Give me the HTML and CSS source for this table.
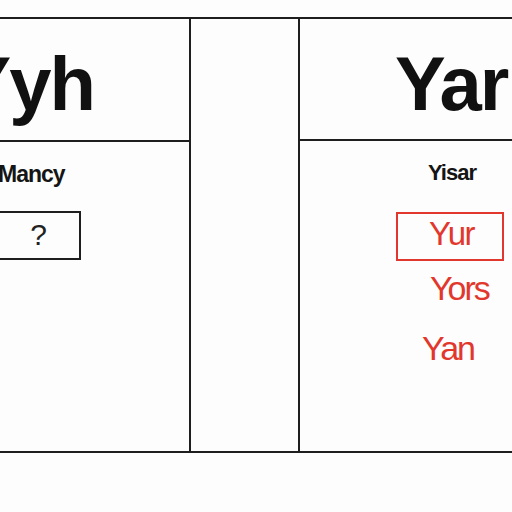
FILE: index.html
```html
<!DOCTYPE html>
<html>
<head>
<meta charset="utf-8">
<link rel="stylesheet" href="styles.css">
</head>
<body>
<div class="table">
  <div class="col col-left">
    <div class="head head-left"><span class="big">Yyh</span></div>
    <div class="body">
      <div class="label label-left">Mancy</div>
      <div class="qbox">?</div>
    </div>
  </div>
  <div class="col col-mid"></div>
  <div class="col col-right">
    <div class="head head-right"><span class="big">Yar</span></div>
    <div class="body body-right">
      <div class="label label-right">Yisar</div>
      <div class="rbox">Yur</div>
      <div class="red red-1">Yors</div>
      <div class="red red-2">Yan</div>
    </div>
  </div>
</div>
</body>
</html>
```
FILE: styles.css
```css
html, body {
  margin: 0;
  padding: 0;
  background: #fdfdfd;
  font-family: "Liberation Sans", Arial, sans-serif;
  color: #111;
}
body {
  padding-top: 17px;
  width: 512px;
  height: 512px;
  overflow: hidden;
  box-sizing: border-box;
}
.table {
  display: grid;
  grid-template-columns: 191px 109px 1fr;
  height: 436px;
  box-sizing: border-box;
  border-top: 2px solid #1e1e1e;
  border-bottom: 2px solid #1e1e1e;
}
.col {
  overflow: hidden;
  display: flex;
  flex-direction: column;
}
.col-left, .col-mid {
  border-right: 2px solid #1e1e1e;
}
.head {
  height: 123px;
  box-sizing: border-box;
  border-bottom: 2px solid #1e1e1e;
  display: flex;
  white-space: nowrap;
  padding-top: 27px;
}
.head-left {
  justify-content: flex-end;
  padding-right: 95px;
}
.head-right {
  height: 122px;
  padding-left: 95px;
}
.big {
  font-weight: bold;
  font-size: 76px;
  line-height: 76px;
  letter-spacing: -2px;
}
.body {
  display: flex;
  flex-direction: column;
}
.label {
  font-size: 23px;
  font-weight: bold;
  letter-spacing: -1px;
  line-height: 24px;
  margin-top: 20px;
  white-space: nowrap;
  color: #151515;
}
.label-left {
  margin-left: -2px;
}
.label-right {
  margin-left: 128px;
  font-size: 22px;
}
.qbox {
  margin-top: 25px;
  margin-left: -4px;
  width: 85px;
  height: 49px;
  box-sizing: border-box;
  border: 2px solid #1e1e1e;
  font-size: 30px;
  line-height: 44px;
  text-align: center;
  color: #222;
}
.rbox {
  margin-top: 27px;
  margin-left: 96px;
  width: 108px;
  height: 49px;
  box-sizing: border-box;
  border: 2px solid #e2372c;
  font-size: 33px;
  line-height: 40px;
  letter-spacing: -1.5px;
  padding-left: 31px;
  color: #e2372c;
}
.red {
  font-size: 34px;
  letter-spacing: -2px;
  line-height: 40px;
  color: #e2372c;
}
.red-1 {
  margin-top: 7px;
  margin-left: 130px;
}
.red-2 {
  margin-top: 20px;
  margin-left: 122px;
}
```
